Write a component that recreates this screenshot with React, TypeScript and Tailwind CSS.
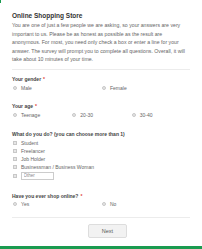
import React from "react";

function Radio({ label }: { label: string }) {
  return (
    <div className="flex items-center h-[8px] pl-[1px]">
      <span className="w-[4px] h-[4px] rounded-full bg-[#e6e6e6] border-[0.5px] border-[#c8c8c8]" />
      <span className="ml-[4px] text-[#666]">{label}</span>
    </div>
  );
}

function Check({ label }: { label: string }) {
  return (
    <div className="flex items-center h-[8px] pl-[1px]">
      <span className="w-[4px] h-[4px] bg-[#e6e6e6] border-[0.5px] border-[#c8c8c8]" />
      <span className="ml-[4px] text-[#666]">{label}</span>
    </div>
  );
}

function Heading({ text, required }: { text: string; required?: boolean }) {
  return (
    <p className="h-[8px] leading-[8px] text-[#444] font-semibold">
      {text}
      {required && <span className="ml-[2px] text-[#e0433b]">*</span>}
    </p>
  );
}

const INTRO = [
  "You are one of just a few people we are asking, so your answers are very",
  "important to us. Please be as honest as possible as the result are",
  "anonymous. For most, you need only check a box or enter a line for your",
  "answer. The survey will prompt you to complete all questions. Overall, it will",
  "take about 10 minutes of your time.",
];

export default function App() {
  return (
    <div className="relative w-[202px] h-[249px] bg-white overflow-hidden font-['Liberation_Sans',Arial,sans-serif] text-[5px] leading-[8px]">
      <span className="absolute left-0 top-0 w-[1px] h-[3px] bg-[#1a9b50]" />
      <div className="px-[12px] pt-[12px]">
        <h1 className="text-[6.5px] leading-[8px] font-bold text-[#333]">Online Shopping Store</h1>
        <p className="mt-[1.4px] leading-[8.4px] text-[5.2px] text-[#666] whitespace-nowrap">
          {INTRO.map((line) => (
            <span key={line} className="block">
              {line}
            </span>
          ))}
        </p>
        <div className="mt-[6px] border-t border-[#ececec]" />

        <div className="mt-[5px]">
          <Heading text="Your gender" required />
          <div className="mt-[1px] grid grid-cols-2">
            <Radio label="Male" />
            <Radio label="Female" />
          </div>
        </div>

        <div className="mt-[10px]">
          <Heading text="Your age" required />
          <div className="mt-[1px] grid grid-cols-3">
            <Radio label="Teenage" />
            <Radio label="20-30" />
            <Radio label="30-40" />
          </div>
        </div>

        <div className="mt-[11px]">
          <Heading text="What do you do? (you can choose more than 1)" />
          <div className="mt-[0.3px] flex flex-col">
            <Check label="Student" />
            <Check label="Freelancer" />
            <Check label="Job Holder" />
            <Check label="Businessman / Business Woman" />
            <div className="flex items-center h-[9px] mt-[1px] pl-[1px]">
              <span className="w-[4px] h-[4px] bg-[#e6e6e6] border-[0.5px] border-[#c8c8c8]" />
              <input
                placeholder="Other"
                className="ml-[3.5px] w-[33px] h-[7.5px] px-[2px] border-[0.5px] border-[#ccc] text-[4.5px] text-[#666] placeholder-[#888] outline-none"
              />
            </div>
          </div>
        </div>

        <div className="mt-[11px]">
          <Heading text="Have you ever shop online?" required />
          <div className="mt-[0.3px] grid grid-cols-2">
            <Radio label="Yes" />
            <Radio label="No" />
          </div>
        </div>

        <div className="mt-[9px] border-t border-[#ececec]" />
        <div className="mt-[6px] flex justify-center pl-[13px]">
          <button className="w-[39px] h-[14px] rounded-[2px] border-[0.5px] border-[#ddd] bg-[#f2f2f2] text-[5.5px] text-[#555]">
            Next
          </button>
        </div>
      </div>
      <div className="absolute left-0 bottom-0 w-full h-[3px] bg-[#1a9b50]" />
    </div>
  );
}
